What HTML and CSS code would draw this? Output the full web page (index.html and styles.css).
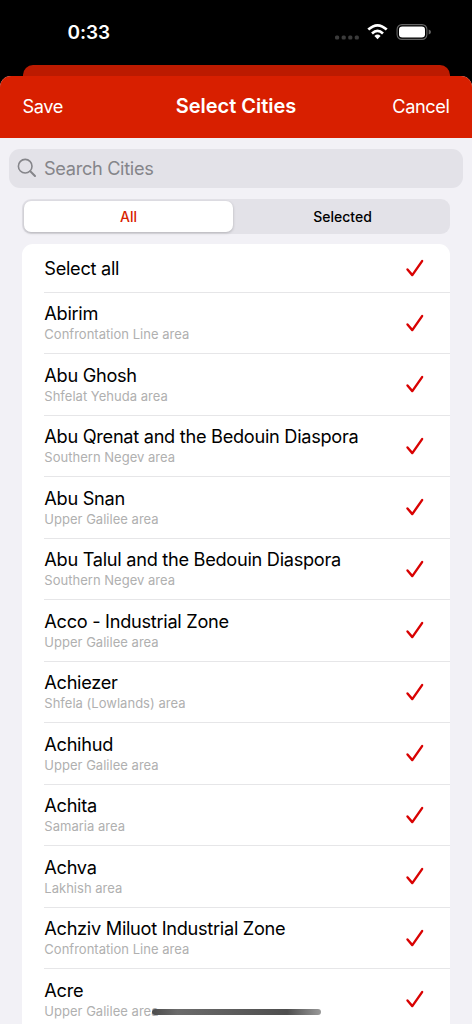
FILE: index.html
```
<!DOCTYPE html>
<html lang="en">
<head>
<meta charset="utf-8">
<title>Select Cities</title>
<link rel="stylesheet" href="styles.css">
</head>
<body>
<svg class="defs" width="0" height="0" aria-hidden="true">
  <symbol id="check" viewBox="0 0 20 20"><path d="M2.5 11.5 L7.3 17.1 L17.1 3.1" fill="none" stroke="#d90202" stroke-width="2.4" stroke-linecap="round" stroke-linejoin="round"/></symbol>
</svg>
<div class="screen">
  <div class="status">
    <span class="time">0:33</span>
    <svg class="indicators" width="100" height="20" viewBox="0 0 100 20">
      <g fill="#3b3b3b"><rect x="2" y="13.4" width="4.2" height="4.2" rx="1.5"/><rect x="8.6" y="13.4" width="4.2" height="4.2" rx="1.5"/><rect x="15.2" y="13.4" width="4.2" height="4.2" rx="1.5"/><rect x="21.7" y="13.4" width="4.2" height="4.2" rx="1.5"/></g>
      <g fill="none" stroke="#fff" stroke-width="2.7"><path d="M35.3 7.6 Q44.5 -0.9 53.7 7.6"/><path d="M39 11.4 Q44.5 6.4 50 11.4"/></g>
      <path d="M41.4 13.9 Q44.5 11.2 47.6 13.9 L44.5 17.3 Z" fill="#fff"/>
      <rect x="64.1" y="2.6" width="29.8" height="14.8" rx="4.8" fill="none" stroke="#646464" stroke-width="1.1"/>
      <rect x="66" y="4.5" width="26" height="11" rx="3.3" fill="#fff"/>
      <path d="M95.7 7.5 Q98 8.4 98 10 Q98 11.7 95.7 12.6Z" fill="#646464"/>
    </svg>
  </div>
  <div class="sheet-behind"></div>
  <main class="sheet">
    <header class="nav"><span class="nav-save">Save</span><h1 class="nav-title">Select Cities</h1><span class="nav-cancel">Cancel</span></header>
    <div class="search">
      <svg width="20" height="20" viewBox="0 0 20 20" fill="none" stroke="#85858a" stroke-linecap="round"><circle cx="8.2" cy="8.2" r="6.8" stroke-width="1.6"/><path d="M13.3 13.3 L18 18" stroke-width="2"/></svg>
      <span class="placeholder">Search Cities</span>
    </div>
    <div class="segments"><span class="segment active">All</span><span class="segment">Selected</span></div>
    <ul class="list">
      <li class="row row-all"><span class="name">Select all</span><svg class="check"><use href="#check"/></svg></li>
      <li class="row"><div><div class="name">Abirim</div><div class="area">Confrontation Line area</div></div><svg class="check"><use href="#check"/></svg></li>
      <li class="row"><div><div class="name">Abu Ghosh</div><div class="area">Shfelat Yehuda area</div></div><svg class="check"><use href="#check"/></svg></li>
      <li class="row"><div><div class="name">Abu Qrenat and the Bedouin Diaspora</div><div class="area">Southern Negev area</div></div><svg class="check"><use href="#check"/></svg></li>
      <li class="row"><div><div class="name">Abu Snan</div><div class="area">Upper Galilee area</div></div><svg class="check"><use href="#check"/></svg></li>
      <li class="row"><div><div class="name">Abu Talul and the Bedouin Diaspora</div><div class="area">Southern Negev area</div></div><svg class="check"><use href="#check"/></svg></li>
      <li class="row"><div><div class="name">Acco - Industrial Zone</div><div class="area">Upper Galilee area</div></div><svg class="check"><use href="#check"/></svg></li>
      <li class="row"><div><div class="name">Achiezer</div><div class="area">Shfela (Lowlands) area</div></div><svg class="check"><use href="#check"/></svg></li>
      <li class="row"><div><div class="name">Achihud</div><div class="area">Upper Galilee area</div></div><svg class="check"><use href="#check"/></svg></li>
      <li class="row"><div><div class="name">Achita</div><div class="area">Samaria area</div></div><svg class="check"><use href="#check"/></svg></li>
      <li class="row"><div><div class="name">Achva</div><div class="area">Lakhish area</div></div><svg class="check"><use href="#check"/></svg></li>
      <li class="row"><div><div class="name">Achziv Miluot Industrial Zone</div><div class="area">Confrontation Line area</div></div><svg class="check"><use href="#check"/></svg></li>
      <li class="row"><div><div class="name">Acre</div><div class="area">Upper Galilee area</div></div><svg class="check"><use href="#check"/></svg></li>
    </ul>
  </main>
  <div class="home-indicator"></div>
</div>
</body>
</html>
```
FILE: styles.css
```
* { box-sizing: border-box; }
body { margin: 0; background: #000; font-family: Inter, "Liberation Sans", sans-serif; }
.defs { display: block; }
.screen { position: relative; width: 472px; height: 1024px; overflow: hidden; display: flex; flex-direction: column; }
.status { height: 65px; flex: none; display: flex; justify-content: space-between; align-items: center; padding: 0 40px 1px 67.5px; color: #fff; }
.time { font-size: 19px; line-height: 24px; font-weight: 600; letter-spacing: -0.1px; padding-top: 2px; }
.indicators { margin-right: -1px; }
.sheet-behind { height: 21px; flex: none; margin: 0 22.5px -10px; background: #bc1a00; border-radius: 10px 10px 0 0; }
.sheet { flex: 1; min-height: 0; overflow: hidden; background: #f2f1f6; border-radius: 11px 11px 0 0; display: flex; flex-direction: column; position: relative; }
.nav { height: 61.5px; flex: none; background: #d81f00; color: #fff; display: grid; grid-template-columns: 1fr auto 1fr; align-items: center; padding: 0 22.5px 1px; font-size: 18.2px; line-height: 24px; letter-spacing: -0.4px; }
.nav-title { margin: 0; padding-bottom: 1px; font-size: 20px; font-weight: 600; letter-spacing: -0.03px; }
.nav-cancel { text-align: right; }
.search { height: 39.5px; flex: none; margin: 11px 9px 0; border-radius: 11px; background: #e3e2e8; display: flex; align-items: center; padding: 0 8px; gap: 7px; }
.placeholder { color: #85858a; font-size: 18.2px; line-height: 24px; letter-spacing: -0.33px; }
.segments { height: 35px; flex: none; margin: 11px 22px 0; padding: 2px; border-radius: 9px; background: #e3e2e8; display: grid; grid-template-columns: 209px 1fr; gap: 6px; }
.segment { display: flex; align-items: center; justify-content: center; font-size: 14px; font-weight: 500; color: #000; border-radius: 7px; }
.active { background: #fff; color: #d81f00; box-shadow: 0 1px 3px rgba(0,0,0,.22); }
.segment:last-child { padding-right: 2px; }
.list { flex: none; list-style: none; margin: 10px 22.3px 0; padding: 0 0 0 22px; background: #fff; border-radius: 11px 11px 0 0; }
.row { height: 61.5px; display: flex; justify-content: space-between; align-items: center; padding-right: 25px; border-bottom: 1px solid #e6e6e8; }
.row-all { height: 48.5px; }
.name { font-size: 18.2px; line-height: 22px; letter-spacing: -0.29px; color: #000; }
.area { font-size: 13px; line-height: 18px; margin-top: 1px; color: #b0b0b0; letter-spacing: 0.02px; }
.check { width: 20px; height: 20px; flex: none; }
.home-indicator { position: absolute; left: 151.5px; top: 1009px; width: 169px; height: 6px; border-radius: 3px; background: linear-gradient(90deg, #4c4c4c, #6b6b6b 15%, #4e4e4e 80%, #999); }
```
